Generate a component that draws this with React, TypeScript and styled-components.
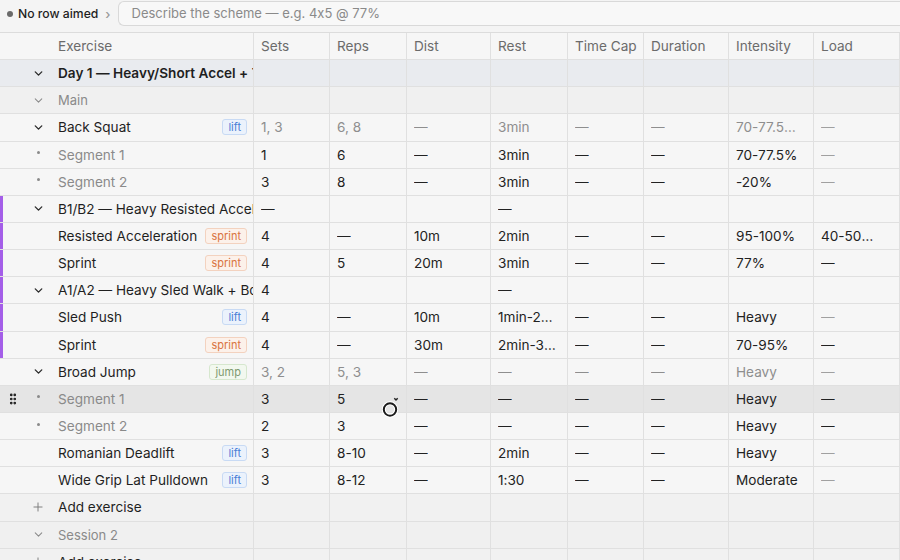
import React from "react";
import styled, { createGlobalStyle } from "styled-components";
import { ChevronDown, GripVertical, Plus } from "lucide-react";

const Global = createGlobalStyle`
  html, body { margin: 0; padding: 0; background: #f6f6f6; }
  body { font-family: Inter, "Noto Sans", "Liberation Sans", sans-serif; color: #222; -webkit-font-smoothing: antialiased; font-feature-settings: "calt" 0; }
  * { box-sizing: border-box; }
`;

const COLS = "254px 76px 77px 84px 77px 76px 85px 85px 86px";

const Page = styled.div`
  width: 900px;
  height: 560px;
  overflow: hidden;
  display: flex;
  flex-direction: column;
`;

const TopBar = styled.div`
  height: 33px;
  flex: none;
  display: flex;
  align-items: center;
  gap: 7px;
  padding: 0 0 0 7px;
  background: #f4f4f4;
  border-bottom: 1px solid #dcdcdc;
`;

const Aim = styled.div`
  display: flex;
  align-items: center;
  gap: 5px;
  margin-top: -5px;
  font-size: 12.2px;
  font-weight: 500;
  color: #1e1e1e;
  white-space: nowrap;
`;

const Dot = styled.span`
  width: 6px;
  height: 6px;
  border-radius: 50%;
  background: #6a6a6a;
`;

const Caret = styled.span`
  color: #999;
  font-size: 13px;
  margin-left: 2px;
`;

const Prompt = styled.div`
  flex: 1;
  height: 25px;
  margin-top: -6px;
  border: 1px solid #d9d9d9;
  border-right: none;
  border-radius: 6px 0 0 6px;
  background: #f8f8f8;
  display: flex;
  align-items: center;
  padding-left: 13px;
  font-size: 13px;
  color: #8a8a8a;
  font-feature-settings: "calt" 0;
`;

const Table = styled.div`
  display: flex;
  flex-direction: column;
`;

type RowKind = "header" | "day" | "section" | "plain" | "hover" | "add";

const rowBg: Record<RowKind, string> = {
  header: "#f6f6f6",
  day: "#e9ebef",
  section: "#f0f0f0",
  plain: "#f6f6f6",
  hover: "#e5e5e5",
  add: "#f1f1f1",
};

const Row = styled.div<{ $kind: RowKind }>`
  display: grid;
  grid-template-columns: ${COLS};
  height: 27.15px;
  flex: none;
  background: ${(p) => rowBg[p.$kind]};
  border-bottom: 1px solid #e0e0e0;
`;

const Cell = styled.div<{ $muted?: boolean; $light?: boolean; $head?: boolean; $last?: boolean }>`
  border-right: 1px solid #e0e0e0;
  padding: 0 ${(p) => (p.$head ? "2px" : p.$last ? "20px" : "9px")} 0 7px;
  display: flex;
  align-items: center;
  font-size: 13.6px;
  color: ${(p) => (p.$head ? "#6b6b6b" : p.$light ? "#a0a0a0" : p.$muted ? "#8e8e8e" : "#222")};
  position: relative;
  min-width: 0;
`;

const CellText = styled.span`
  white-space: nowrap;
  overflow: hidden;
  text-overflow: ellipsis;
  min-width: 0;
`;

const NameCell = styled.div<{ $bar?: boolean }>`
  border-right: 1px solid #e0e0e0;
  display: flex;
  align-items: center;
  overflow: hidden;
  min-width: 0;
  box-shadow: ${(p) => (p.$bar ? "inset 3px 0 0 #a45ee8" : "none")};
`;

const HandleSlot = styled.div`
  width: 26px;
  flex: none;
  display: flex;
  align-items: center;
  justify-content: center;
  color: #222;
`;

const ChevSlot = styled.div<{ $tone?: string }>`
  width: 24px;
  flex: none;
  margin-right: 8px;
  display: flex;
  align-items: center;
  justify-content: center;
  color: ${(p) => p.$tone || "#333"};
`;

const SegDot = styled.span`
  width: 3px;
  height: 3px;
  border-radius: 50%;
  background: #8a8a8a;
  margin-top: -4px;
`;

type NameStyle = "day" | "section" | "normal" | "segment" | "head";

const Name = styled.span<{ $style: NameStyle }>`
  flex: 1;
  min-width: 0;
  white-space: nowrap;
  overflow: hidden;
  font-size: ${(p) => (p.$style === "section" ? "13px" : "13.6px")};
  font-weight: ${(p) => (p.$style === "day" ? 600 : 400)};
  color: ${(p) =>
    p.$style === "section" || p.$style === "segment" ? "#8a8a8a" : p.$style === "head" ? "#6b6b6b" : "#1f1f1f"};
`;

type TagKind = "lift" | "sprint" | "jump";
const tagColors: Record<TagKind, [string, string, string]> = {
  lift: ["#ebf2fc", "#c8daf4", "#4b7fd6"],
  sprint: ["#fcf1ea", "#f3d2bf", "#d9743f"],
  jump: ["#f2f8ef", "#d6e7ce", "#7f9a70"],
};

const Tag = styled.span<{ $kind: TagKind }>`
  flex: none;
  height: 16px;
  padding: 0 5px;
  margin: 0 6px 0 6px;
  border-radius: 3px;
  font-size: 11px;
  line-height: 14px;
  background: ${(p) => tagColors[p.$kind][0]};
  border: 1px solid ${(p) => tagColors[p.$kind][1]};
  color: ${(p) => tagColors[p.$kind][2]};
`;

const BusyCursor = styled.svg`
  position: absolute;
  left: 52px;
  top: 9px;
  z-index: 5;
  pointer-events: none;
`;

type Lead = "none" | "chev" | "chevGray" | "dot" | "plus";

interface RowData {
  kind: RowKind;
  name: string;
  nameStyle: NameStyle;
  lead: Lead;
  tag?: TagKind;
  bar?: boolean;
  handle?: boolean;
  muted?: boolean;
  loadLight?: boolean;
  values: string[];
}

const D = "—";
const E = ["", "", "", "", "", "", "", ""];

const rows: RowData[] = [
  { kind: "day", name: "Day 1 — Heavy/Short Accel + Tempo Conditioning", nameStyle: "day", lead: "chev", values: E },
  { kind: "section", name: "Main", nameStyle: "section", lead: "chevGray", values: E },
  { kind: "plain", name: "Back Squat", nameStyle: "normal", lead: "chev", tag: "lift", muted: true, loadLight: true, values: ["1, 3", "6, 8", D, "3min", D, D, "70-77.5%, -20%", D] },
  { kind: "plain", name: "Segment 1", nameStyle: "segment", lead: "dot", loadLight: true, values: ["1", "6", D, "3min", D, D, "70-77.5%", D] },
  { kind: "plain", name: "Segment 2", nameStyle: "segment", lead: "dot", loadLight: true, values: ["3", "8", D, "3min", D, D, "-20%", D] },
  { kind: "plain", name: "B1/B2 — Heavy Resisted Acceleration", nameStyle: "normal", lead: "chev", bar: true, values: [D, "", "", D, "", "", "", ""] },
  { kind: "plain", name: "Resisted Acceleration", nameStyle: "normal", lead: "none", tag: "sprint", bar: true, values: ["4", D, "10m", "2min", D, D, "95-100%", "40-50% BW"] },
  { kind: "plain", name: "Sprint", nameStyle: "normal", lead: "none", tag: "sprint", bar: true, values: ["4", "5", "20m", "3min", D, D, "77%", D] },
  { kind: "plain", name: "A1/A2 — Heavy Sled Walk + Bound", nameStyle: "normal", lead: "chev", bar: true, values: ["4", "", "", D, "", "", "", ""] },
  { kind: "plain", name: "Sled Push", nameStyle: "normal", lead: "none", tag: "lift", bar: true, loadLight: true, values: ["4", D, "10m", "1min-2min", D, D, "Heavy", D] },
  { kind: "plain", name: "Sprint", nameStyle: "normal", lead: "none", tag: "sprint", bar: true, values: ["4", D, "30m", "2min-3min", D, D, "70-95%", D] },
  { kind: "plain", name: "Broad Jump", nameStyle: "normal", lead: "chev", tag: "jump", muted: true, loadLight: true, values: ["3, 2", "5, 3", D, D, D, D, "Heavy", D] },
  { kind: "hover", name: "Segment 1", nameStyle: "segment", lead: "dot", handle: true, values: ["3", "5", D, D, D, D, "Heavy", D] },
  { kind: "plain", name: "Segment 2", nameStyle: "segment", lead: "dot", values: ["2", "3", D, D, D, D, "Heavy", D] },
  { kind: "plain", name: "Romanian Deadlift", nameStyle: "normal", lead: "none", tag: "lift", loadLight: true, values: ["3", "8-10", D, "2min", D, D, "Heavy", D] },
  { kind: "plain", name: "Wide Grip Lat Pulldown", nameStyle: "normal", lead: "none", tag: "lift", loadLight: true, values: ["3", "8-12", D, "1:30", D, D, "Moderate", D] },
  { kind: "add", name: "Add exercise", nameStyle: "normal", lead: "plus", values: E },
  { kind: "section", name: "Session 2", nameStyle: "section", lead: "chevGray", values: E },
  { kind: "add", name: "Add exercise", nameStyle: "normal", lead: "plus", values: E },
];

const headers = ["Sets", "Reps", "Dist", "Rest", "Time Cap", "Duration", "Intensity", "Load"];

function LeadIcon({ lead }: { lead: Lead }) {
  if (lead === "chev")
    return (
      <ChevSlot $tone="#2a2a2a">
        <ChevronDown size={13} strokeWidth={2.5} />
      </ChevSlot>
    );
  if (lead === "chevGray")
    return (
      <ChevSlot $tone="#8a8a8a">
        <ChevronDown size={13} strokeWidth={1.9} />
      </ChevSlot>
    );
  if (lead === "dot")
    return (
      <ChevSlot>
        <SegDot />
      </ChevSlot>
    );
  if (lead === "plus")
    return (
      <ChevSlot $tone="#7a7a7a">
        <Plus size={14} strokeWidth={1.6} />
      </ChevSlot>
    );
  return <ChevSlot />;
}

export default function App() {
  return (
    <Page>
      <Global />
      <TopBar>
        <Aim>
          <Dot />
          No row aimed
          <Caret>›</Caret>
        </Aim>
        <Prompt>Describe the scheme — e.g. 4x5 @ 77%</Prompt>
      </TopBar>
      <Table>
        <Row $kind="header">
          <NameCell>
            <HandleSlot />
            <ChevSlot />
            <Name $style="head">Exercise</Name>
          </NameCell>
          {headers.map((h) => (
            <Cell key={h} $head>
              <CellText>{h}</CellText>
            </Cell>
          ))}
        </Row>
        {rows.map((r, i) => (
          <Row key={i} $kind={r.kind}>
            <NameCell $bar={r.bar}>
              <HandleSlot>{r.handle && <GripVertical size={14} strokeWidth={2.6} />}</HandleSlot>
              <LeadIcon lead={r.lead} />
              <Name $style={r.nameStyle}>{r.name}</Name>
              {r.tag && <Tag $kind={r.tag}>{r.tag}</Tag>}
            </NameCell>
            {r.values.map((v, j) => (
              <Cell key={j} $last={j === 7} $muted={r.muted} $light={j === 7 && v === D && !!r.loadLight}>
                <CellText>{v}</CellText>
                {r.kind === "hover" && j === 1 && (
                  <BusyCursor width="24" height="24" viewBox="0 0 24 24">
                    <path d="M12.3 3.2 L14 5 L15.7 3.2" fill="none" stroke="#222" strokeWidth="1.4" />
                    <circle cx="8" cy="14.5" r="6.2" fill="none" stroke="#fff" strokeWidth="4" />
                    <circle cx="8" cy="14.5" r="6.2" fill="none" stroke="#1a1a1a" strokeWidth="2" />
                  </BusyCursor>
                )}
              </Cell>
            ))}
          </Row>
        ))}
      </Table>
    </Page>
  );
}
